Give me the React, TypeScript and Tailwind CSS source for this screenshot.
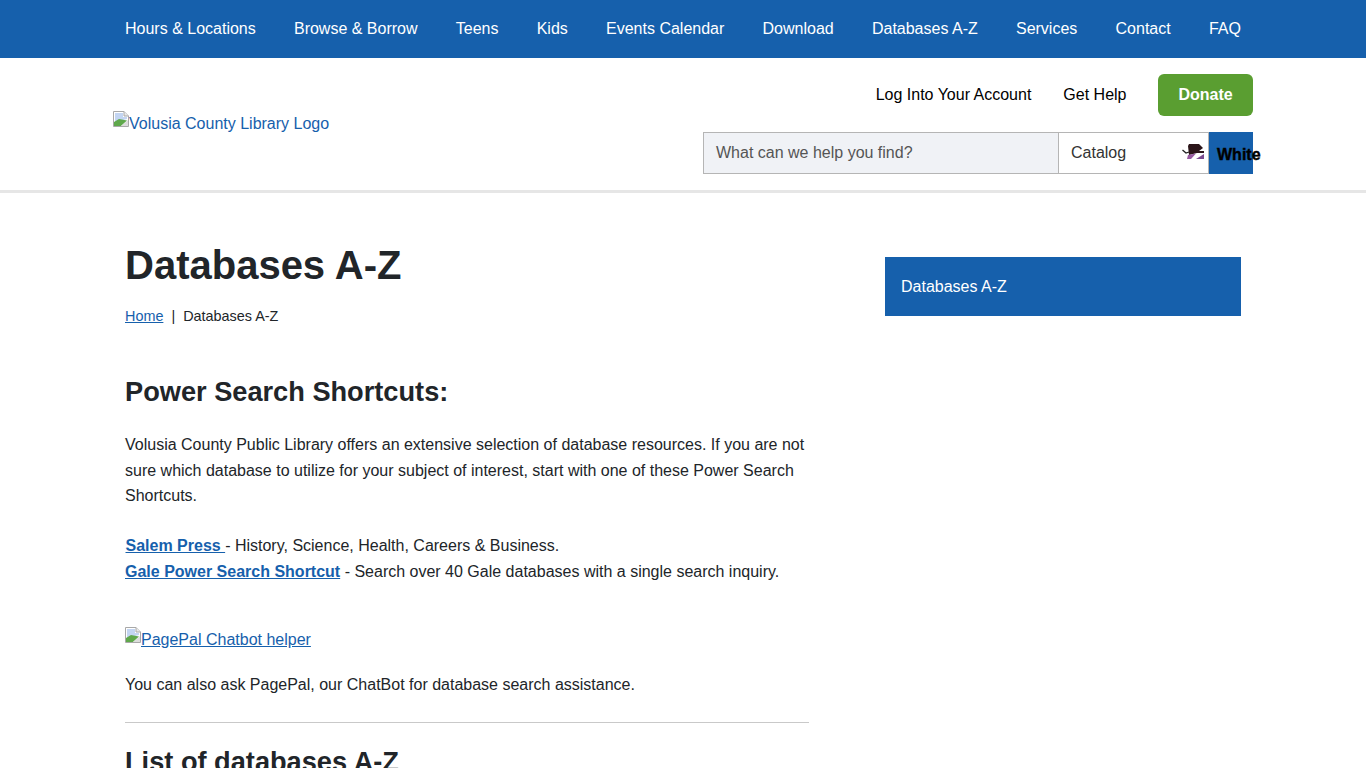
const navItems = ["Hours & Locations", "Browse & Borrow", "Teens", "Kids", "Events Calendar", "Download", "Databases A-Z", "Services", "Contact", "FAQ"];

function BrokenImage() {
  return (
    <svg width="16" height="16" viewBox="0 0 16 16" className="shrink-0">
      <path d="M0.5 0.5H11L15.5 5V15.5H0.5Z" fill="#fff" stroke="#a8a8a8" />
      <path d="M11 0.5V5H15.5" fill="#e8e8e8" stroke="#a8a8a8" />
      <path d="M2 2H10V6H14V8L2 11Z" fill="#c3d5f2" />
      <path d="M1 15V11L6 8L14 9.5L8 15Z" fill="#5fa84b" />
      <path d="M8 15L15 9V15Z" fill="#dcdcdc" />
    </svg>
  );
}

function Arrow() {
  return (
    <svg width="24" height="18" viewBox="0 0 24 18" className="shrink-0 mb-[2px]">
      <path d="M0.5 7L4 10L7 9" fill="none" stroke="#222" strokeWidth="1.3" />
      <path d="M6 3L7 1H17L21 5L17 8H22V10H15L7 12Z" fill="#2b1519" />
      <path d="M6 12L14 10.5L9 16H5Z" fill="#96589f" />
      <path d="M14 16L22 11V16Z" fill="#7b4a8f" />
    </svg>
  );
}

export default function App() {
  return (
    <div className="h-screen overflow-hidden bg-white font-['Liberation_Sans',Arial,sans-serif] text-[16px] text-[#212529]">
      <nav className="bg-[#1660ac] h-[58px] px-[125px] flex items-center justify-between text-white">
        {navItems.map((item) => (
          <span key={item} className="whitespace-nowrap">{item}</span>
        ))}
      </nav>

      <header className="h-[135px] border-b-[3px] border-[#e6e6e6] px-[113px] flex justify-between">
        <a className="mt-[53px] h-[24px] flex items-start text-[#1660ac]">
          <BrokenImage />
          <span className="leading-[24px] pt-[1px]">Volusia County Library Logo</span>
        </a>
        <div className="flex flex-col items-end pt-[16px]">
          <div className="flex items-center h-[42px]">
            <span className="text-black">Log Into Your Account</span>
            <span className="text-black ml-[32px]">Get Help</span>
            <span className="ml-[31.5px] w-[95px] h-[42px] rounded-[6px] bg-[#5a9e31] text-white font-bold flex items-center justify-center">Donate</span>
          </div>
          <div className="flex mt-[16px] h-[42px]">
            <div className="w-[356px] bg-[#f0f2f6] border border-[#b5b5b5] flex items-center pl-[12px] text-[#555]">What can we help you find?</div>
            <div className="w-[150px] border border-l-0 border-[#b5b5b5] flex items-center justify-between pl-[12px] pr-[2px]">
              <span className="text-[#333]">Catalog</span>
              <Arrow />
            </div>
            <div className="w-[44px] bg-[#1660ac] flex items-center pl-[8px] pt-[3px]">
              <span className="font-bold text-black whitespace-nowrap [-webkit-text-stroke:0.4px_black]">White</span>
            </div>
          </div>
        </div>
      </header>

      <main className="px-[125px] flex justify-between">
        <div className="w-[684px]">
          <h1 className="mt-[49px] text-[40px] leading-[46px] font-bold">Databases A-Z</h1>
          <div className="mt-[18px] text-[14.4px] leading-[20px] flex">
            <a className="text-[#1660ac] underline">Home</a>
            <span className="mx-[8px]">|</span>
            <span>Databases A-Z</span>
          </div>
          <h2 className="mt-[50px] text-[27.2px] leading-[32px] font-bold">Power Search Shortcuts:</h2>
          <p className="mt-[24px] leading-[25.6px]">
            Volusia County Public Library offers an extensive selection of database resources. If you are not sure which database to utilize for your subject of interest, start with one of these Power Search Shortcuts.
          </p>
          <p className="mt-[24.6px] leading-[25.6px]">
            <a className="ml-[0.5px] text-[#1660ac] font-bold underline">Salem Press </a>
            - History, Science, Health, Careers &amp; Business.
            <br />
            <a className="text-[#1660ac] font-bold underline">Gale Power Search Shortcut</a> - Search over 40 Gale databases with a single search inquiry.
          </p>
          <a className="mt-[42.8px] flex items-start text-[#1660ac] underline h-[24px]">
            <BrokenImage />
            <span className="leading-[24px] pt-[1px]">PagePal Chatbot helper</span>
          </a>
          <p className="mt-[21px] leading-[25.6px]">You can also ask PagePal, our ChatBot for database search assistance.</p>
          <div className="mt-[24px] border-t border-[#c9c9c9]" />
          <h2 className="mt-[23px] text-[27.2px] leading-[32px] font-bold whitespace-nowrap">List of databases A-Z</h2>
        </div>
        <aside className="w-[356px] mt-[64px] h-[59px] bg-[#1660ac] text-white flex items-center pl-[16px]">Databases A-Z</aside>
      </main>
    </div>
  );
}
